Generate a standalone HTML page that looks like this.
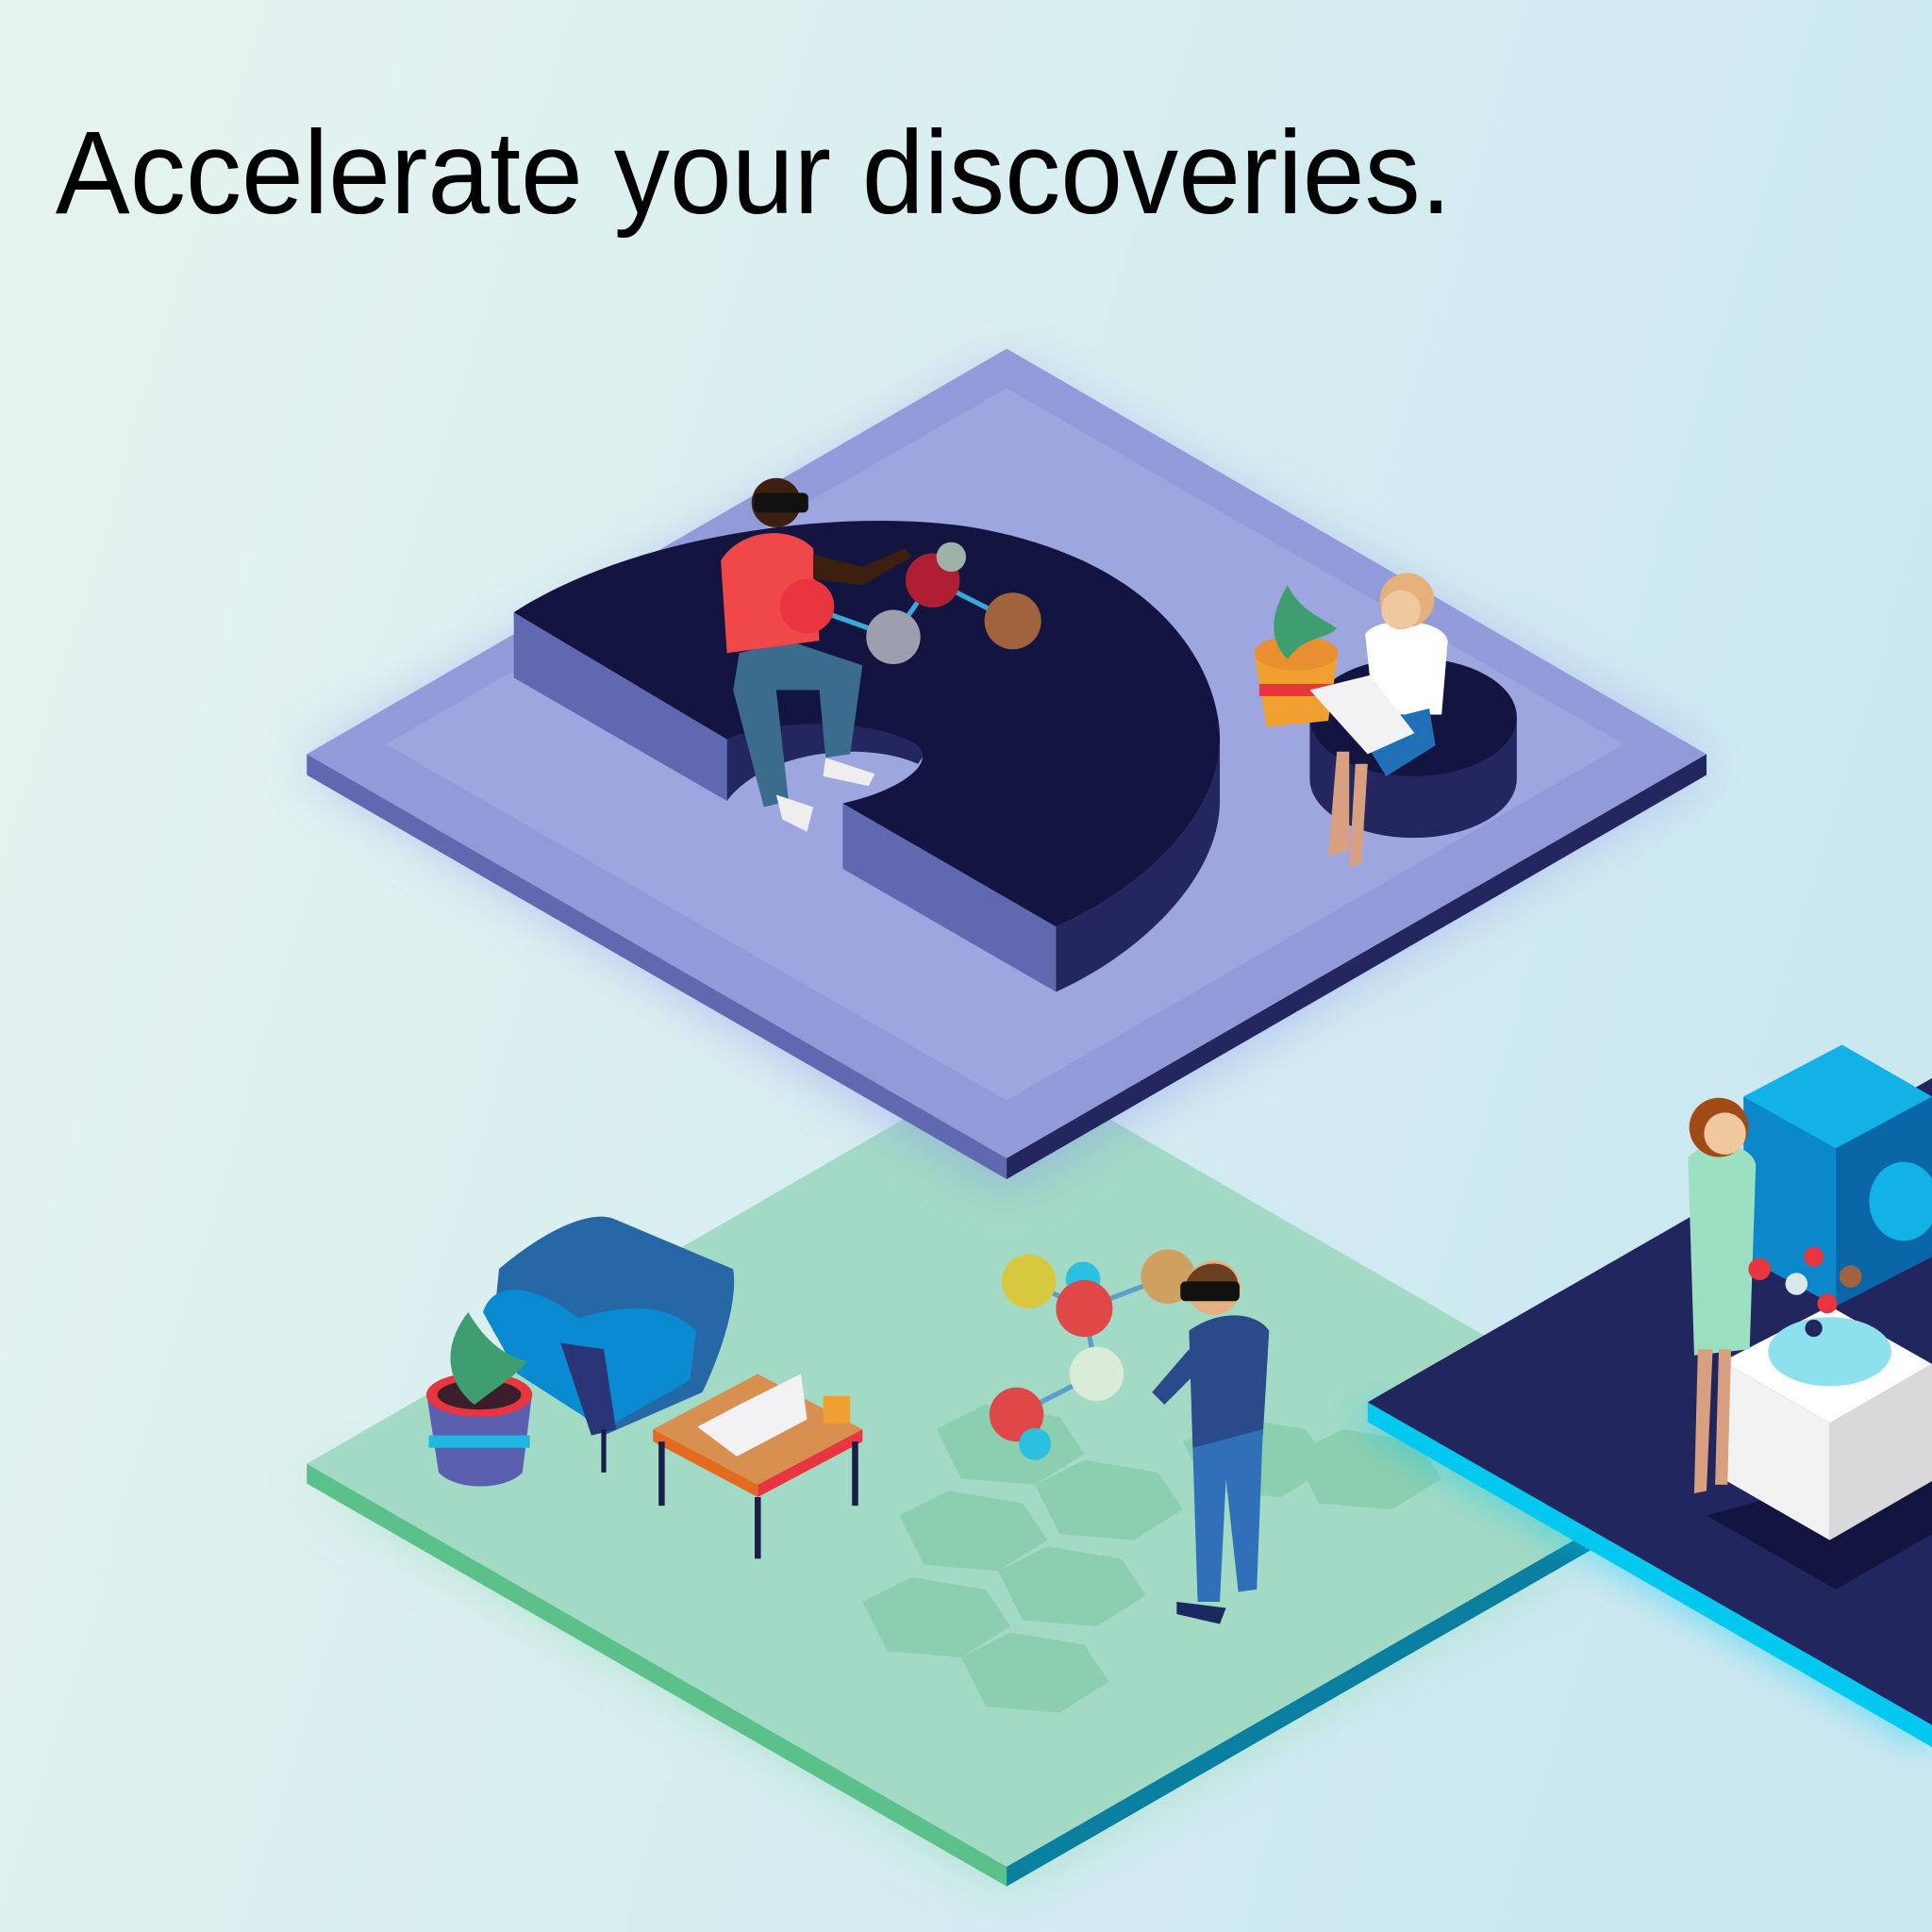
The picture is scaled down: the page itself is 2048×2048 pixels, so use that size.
<!DOCTYPE html>
<html><head><meta charset="utf-8"><style>
html,body{margin:0;padding:0;width:2048px;height:2048px;overflow:hidden}
svg{display:block}
</style></head><body>
<svg width="2048" height="2048" viewBox="0 0 1568 1568" xmlns="http://www.w3.org/2000/svg">
<defs>
<linearGradient id="bg" x1="0" y1="0" x2="1" y2="0.3">
<stop offset="0" stop-color="#e6f4ef"/><stop offset="1" stop-color="#cbe8f1"/></linearGradient>
<filter id="bl" x="-20%" y="-20%" width="140%" height="140%"><feGaussianBlur stdDeviation="22"/></filter>
<filter id="bl2" x="-20%" y="-20%" width="140%" height="140%"><feGaussianBlur stdDeviation="14"/></filter>
</defs>
<rect width="1568" height="1568" fill="url(#bg)"/>
<text x="45" y="173" font-family="Liberation Sans, sans-serif" font-size="96" fill="#000" textLength="1133" lengthAdjust="spacingAndGlyphs">Accelerate your discoveries.</text>

<!-- green platform glow -->
<polygon points="249,1200 817,1528 1290,1255" fill="#7fd8a0" opacity="0.5" filter="url(#bl)"/>
<!-- green platform -->
<polygon points="249,1188 817,1515 817,1531 249,1204" fill="#5cc08a"/>
<polygon points="817,1515 1385,1188 1385,1204 817,1531" fill="#0a7fa0"/>
<polygon points="817,860 1385,1188 817,1515 249,1188" fill="#a2dac5"/>
<!-- hexagons -->
<g fill="#8ccfb0">
<polygon points="760,1160 800,1140 860,1150 880,1180 840,1205 780,1200"/>
<polygon points="840,1205 880,1185 940,1195 960,1225 920,1250 860,1245"/>
<polygon points="730,1230 770,1210 830,1220 850,1250 810,1275 750,1270"/>
<polygon points="810,1275 850,1255 910,1265 930,1295 890,1320 830,1315"/>
<polygon points="700,1300 740,1280 800,1290 820,1320 780,1345 720,1340"/>
<polygon points="780,1345 820,1325 880,1335 900,1365 860,1390 800,1385"/>
<polygon points="1050,1180 1090,1160 1150,1170 1170,1200 1130,1225 1070,1220"/>
<polygon points="960,1170 1000,1150 1060,1160 1080,1190 1040,1215 980,1210"/>
</g>

<!-- purple platform glow -->
<polygon points="249,620 817,960 1385,620 817,300" fill="#8a8cf0" opacity="0.55" filter="url(#bl)"/>
<!-- purple platform -->
<polygon points="249,612 817,940 817,957 249,629" fill="#6068b0"/>
<polygon points="817,940 1385,612 1385,629 817,957" fill="#24275f"/>
<polygon points="817,283 1385,612 817,940 249,612" fill="#939ada"/>
<polygon points="817,315 1318,604 817,893 313,604" fill="#9da6df"/>

<!-- D shape sides -->
<polygon points="417,497 590,597 590,650 417,550" fill="#6068b0"/>
<polygon points="684,652 857,752 857,805 684,705" fill="#6068b0"/>
<path d="M857,752 C930,720 990,660 990,600 L990,650 C990,710 930,772 857,805 Z" fill="#24275f"/>
<path d="M590,600 C620,570 720,570 757,603 L745,620 C700,600 620,610 590,650 Z" fill="#24275f"/>
<!-- D top -->
<path d="M417,497 C520,430 700,410 800,430 C950,460 990,550 990,600 C990,660 930,720 857,752 L684,652 C730,642 760,620 745,605 C705,580 620,585 590,600 Z" fill="#13143f"/>

<!-- stool -->
<path d="M1063,582 L1063,632 A84,48 0 0 0 1231,632 L1231,582 Z" fill="#24275f"/>
<ellipse cx="1147" cy="582" rx="84" ry="48" fill="#13143f"/>

<!-- man with VR on D -->
<path d="M600,530 L640,520 L700,540 L690,612 L670,615 L665,560 L630,560 L640,650 L620,655 L595,560 Z" fill="#3b6c8e"/>
<path d="M585,455 C600,430 640,425 660,445 L665,520 L590,530 Z" fill="#f04848"/>
<path d="M660,450 L700,460 L735,445 L740,452 L700,475 L660,470 Z" fill="#3d1f10"/>
<circle cx="630" cy="408" r="20" fill="#3d1f10"/>
<rect x="612" y="400" width="44" height="16" rx="4" fill="#111"/>
<path d="M630,645 L660,655 L655,675 L635,665 Z" fill="#eee"/>
<path d="M670,615 L710,628 L705,638 L668,630 Z" fill="#eee"/>
<!-- molecule -->
<g stroke="#3aa8d8" stroke-width="4"><line x1="655" y1="492" x2="725" y2="517"/><line x1="725" y1="517" x2="757" y2="471"/><line x1="757" y1="471" x2="822" y2="504"/></g>
<circle cx="655" cy="492" r="22" fill="#e8353f"/>
<circle cx="725" cy="517" r="22" fill="#9b9fae"/>
<circle cx="757" cy="471" r="22" fill="#b01e33"/>
<circle cx="822" cy="504" r="23" fill="#a0633d"/>
<circle cx="772" cy="452" r="12" fill="#9fb2a8"/>

<!-- plant pot purple -->
<path d="M1018,530 L1086,530 L1078,585 L1028,590 Z" fill="#f0a030"/>
<rect x="1022" y="555" width="60" height="10" fill="#e8353f"/>
<ellipse cx="1052" cy="530" rx="34" ry="14" fill="#e89030"/>
<path d="M1045,475 C1030,500 1030,520 1045,535 C1060,515 1075,520 1085,510 C1070,500 1055,495 1045,475 Z" fill="#3f9e6f"/>

<!-- woman with laptop -->
<path d="M1108,515 C1115,500 1170,500 1175,520 L1170,580 L1115,580 Z" fill="#fff"/>
<path d="M1100,590 L1160,575 L1165,605 L1125,630 Z" fill="#2070b8"/>
<path d="M1085,610 L1095,610 L1095,690 L1078,695 Z" fill="#d8a080"/>
<path d="M1100,620 L1110,620 L1105,700 L1095,705 Z" fill="#d8a080"/>
<circle cx="1142" cy="487" r="22" fill="#e6b07a"/>
<circle cx="1137" cy="495" r="16" fill="#f0c8a0"/>
<path d="M1063,560 L1112,548 L1148,595 L1110,612 Z" fill="#f2f2f5"/>

<!-- navy platform right -->
<polygon points="1110,1138 1568,1400 1568,1420 1110,1158" fill="#00c8ef" filter="url(#bl2)" opacity="0.6"/>
<polygon points="1110,1138 1568,1400 1568,1418 1110,1154" fill="#00c8ef"/>
<polygon points="1110,1138 1568,875 1568,1400" fill="#22265f"/>
<!-- white box -->
<polygon points="1385,1230 1490,1290 1568,1245 1568,1180" fill="#13143f"/>
<polygon points="1398,1105 1485,1155 1485,1250 1398,1200" fill="#f2f2f2"/>
<polygon points="1485,1155 1568,1107 1568,1202 1485,1250" fill="#d9d9dc"/>
<polygon points="1398,1105 1485,1060 1568,1107 1485,1155" fill="#fff"/>
<ellipse cx="1485" cy="1097" rx="50" ry="28" fill="#8ee0ee"/>
<!-- blue cube -->
<polygon points="1415,890 1495,848 1568,890 1568,1020 1490,1060 1415,1020" fill="#0a88c9"/>
<polygon points="1415,890 1495,848 1568,890 1490,932" fill="#12b2e6"/>
<polygon points="1490,932 1568,890 1568,1020 1490,1060" fill="#0b66a8"/>
<ellipse cx="1545" cy="975" rx="28" ry="32" fill="#12b2e6"/>
<!-- woman right -->
<path d="M1370,940 C1380,925 1420,925 1425,945 L1420,1095 L1375,1100 Z" fill="#9be0c0"/>
<path d="M1378,1095 L1390,1095 L1385,1210 L1375,1212 Z" fill="#d8a080"/>
<path d="M1395,1095 L1405,1095 L1402,1205 L1392,1205 Z" fill="#d8a080"/>
<circle cx="1395" cy="915" r="24" fill="#a04a14"/>
<circle cx="1400" cy="920" r="17" fill="#f0c8a0"/>
<circle cx="1428" cy="1030" r="9" fill="#e8353f"/><circle cx="1458" cy="1042" r="9" fill="#d9e6ea"/><circle cx="1472" cy="1020" r="8" fill="#e8353f"/><circle cx="1502" cy="1036" r="9" fill="#a0633d"/><circle cx="1483" cy="1058" r="8" fill="#e8353f"/><circle cx="1472" cy="1078" r="7" fill="#22265f"/>

<!-- armchair -->
<path d="M405,1030 C440,1000 480,980 500,990 L595,1030 C600,1060 580,1110 570,1130 L490,1165 L400,1080 Z" fill="#2667a6"/>
<path d="M392,1065 C400,1040 430,1040 470,1070 C500,1060 540,1055 565,1080 L560,1120 L490,1160 L420,1115 Z" fill="#0a8ad0"/>
<path d="M455,1090 L490,1095 L500,1160 L480,1165 Z" fill="#2a3578"/>
<line x1="490" y1="1160" x2="490" y2="1195" stroke="#1a1f4a" stroke-width="4"/>
<!-- plant pot green -->
<path d="M346,1130 L432,1130 L424,1195 C410,1210 370,1210 356,1195 Z" fill="#5a5fb0"/>
<rect x="348" y="1165" width="82" height="10" fill="#1fb8e0"/>
<ellipse cx="389" cy="1132" rx="43" ry="18" fill="#e8353f"/>
<ellipse cx="389" cy="1132" rx="34" ry="12" fill="#3a1f2a"/>
<path d="M380,1065 C360,1090 360,1120 385,1140 C405,1125 420,1115 428,1105 C410,1100 395,1090 380,1065 Z" fill="#3f9e6f"/>
<!-- table -->
<polygon points="530,1160 615,1115 700,1160 615,1205" fill="#d89050"/>
<polygon points="530,1160 615,1205 615,1215 530,1170" fill="#e36a20"/>
<polygon points="615,1205 700,1160 700,1170 615,1215" fill="#e8353f"/>
<g stroke="#1a1f4a" stroke-width="5"><line x1="537" y1="1170" x2="537" y2="1222"/><line x1="615" y1="1215" x2="615" y2="1265"/><line x1="694" y1="1170" x2="694" y2="1222"/></g>
<polygon points="566,1158 598,1182 655,1152 650,1115 600,1140" fill="#f2f2f5"/>
<rect x="668" y="1133" width="22" height="22" fill="#f0a030"/>

<!-- man with VR on green -->
<g stroke="#5aa0c8" stroke-width="4"><line x1="835" y1="1040" x2="880" y2="1062"/><line x1="880" y1="1062" x2="948" y2="1036"/><line x1="880" y1="1062" x2="890" y2="1115"/><line x1="825" y1="1148" x2="890" y2="1115"/></g>
<circle cx="835" cy="1040" r="22" fill="#d8c840"/>
<circle cx="879" cy="1038" r="14" fill="#2cc0e0"/>
<circle cx="880" cy="1062" r="23" fill="#e04848"/>
<circle cx="948" cy="1036" r="22" fill="#d0a060"/>
<circle cx="890" cy="1115" r="22" fill="#d8ecd8"/>
<circle cx="825" cy="1148" r="22" fill="#e04848"/>
<circle cx="840" cy="1172" r="13" fill="#2cc0e0"/>
<path d="M965,1080 C990,1062 1020,1065 1030,1080 L1025,1165 L968,1175 Z" fill="#2a4a8a"/>
<path d="M968,1175 L1025,1160 L1020,1290 L1005,1292 L995,1200 L990,1300 L972,1300 Z" fill="#2f70b8"/>
<path d="M965,1095 L935,1130 L945,1140 L975,1110 Z" fill="#2a4a8a"/>
<circle cx="985" cy="1045" r="22" fill="#e8b080"/>
<path d="M963,1040 C970,1020 1005,1020 1005,1045 Z" fill="#6a4020"/>
<rect x="958" y="1040" width="48" height="16" rx="4" fill="#111"/>
<path d="M955,1300 L995,1305 L990,1318 L955,1310 Z" fill="#1a2a60"/>
</svg>
</body></html>
